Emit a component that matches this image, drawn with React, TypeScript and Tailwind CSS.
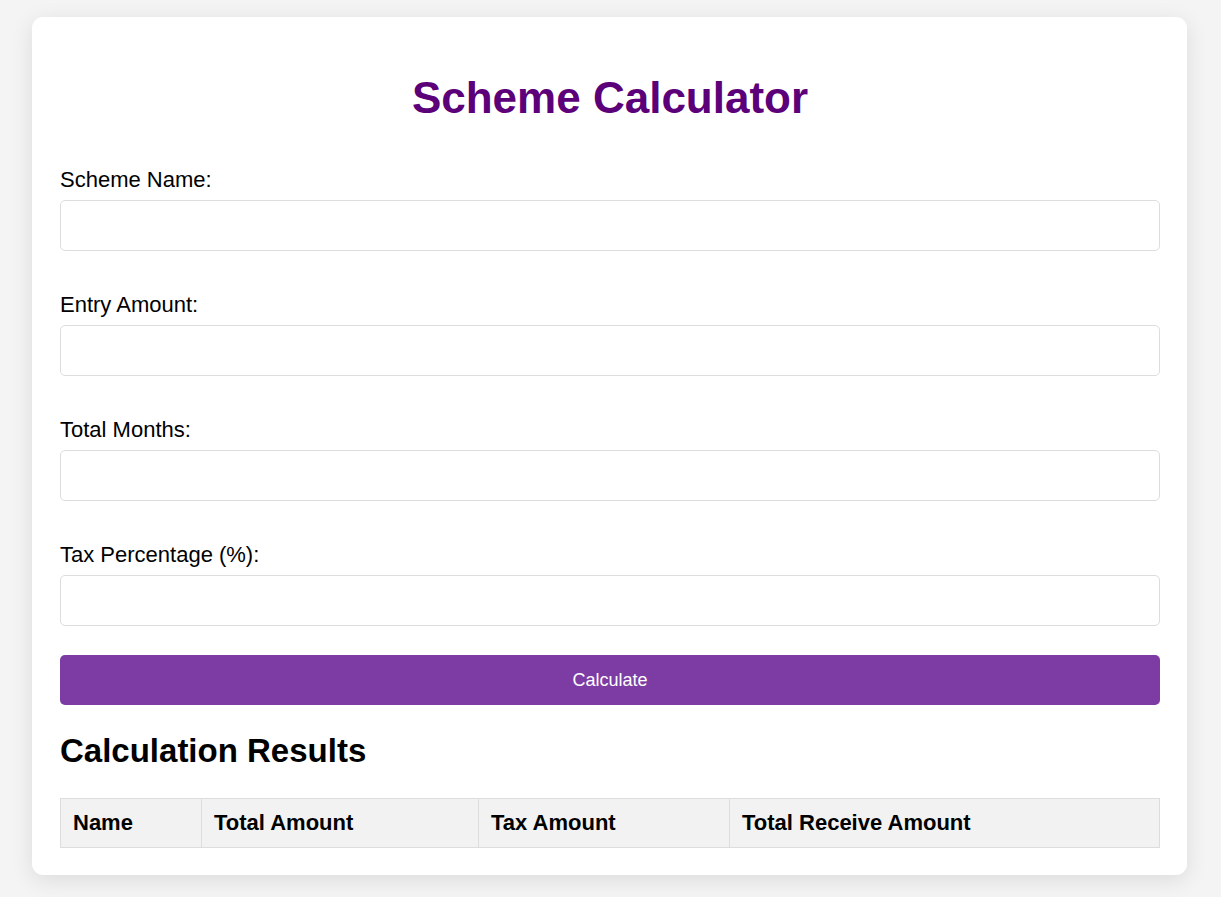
import { useState, type FormEvent } from "react";

type Result = { name: string; total: number; tax: number; receive: number };

const fields = [
  { id: "schemeName", label: "Scheme Name:", type: "text" },
  { id: "entryAmount", label: "Entry Amount:", type: "number" },
  { id: "totalMonths", label: "Total Months:", type: "number" },
  { id: "taxPercentage", label: "Tax Percentage (%):", type: "number" },
];

const columns = [
  { title: "Name", width: "w-[141px]" },
  { title: "Total Amount", width: "w-[277px]" },
  { title: "Tax Amount", width: "w-[251px]" },
  { title: "Total Receive Amount", width: "" },
];

export default function App() {
  const [results, setResults] = useState<Result[]>([]);

  function calculate(event: FormEvent<HTMLFormElement>) {
    event.preventDefault();
    const data = new FormData(event.currentTarget);
    const total = Number(data.get("entryAmount")) * Number(data.get("totalMonths"));
    const tax = (total * Number(data.get("taxPercentage"))) / 100;
    setResults([...results, { name: String(data.get("schemeName")), total, tax, receive: total - tax }]);
  }

  return (
    <div className="min-h-screen bg-[#f4f4f4] pt-[17px] pr-[34px] pb-[22px] pl-8 font-['Liberation_Sans',Arial,sans-serif] text-[22px] leading-[25px] text-black">
      <main className="rounded-[11px] bg-white pt-14 pr-[27px] pb-[27px] pl-7 shadow-[0_5px_22px_rgba(0,0,0,0.1)]">
        <h1 className="text-center text-[44px] leading-[50px] font-bold text-[#5c007a]">Scheme Calculator</h1>
        <form onSubmit={calculate} className="mt-11">
          <div className="flex flex-col gap-[41px]">
            {fields.map((field) => (
              <div key={field.id} className="flex flex-col gap-2">
                <label htmlFor={field.id}>{field.label}</label>
                <input
                  id={field.id}
                  name={field.id}
                  type={field.type}
                  className="h-[51px] w-full rounded-[5px] border border-[#dddddd] bg-white px-3 text-lg"
                />
              </div>
            ))}
          </div>
          <button type="submit" className="mt-[29px] h-[50px] w-full rounded-[5px] bg-[#7d3ca3] text-lg text-white">
            Calculate
          </button>
        </form>
        <h2 className="mt-[27px] text-[33px] leading-[38px] font-bold">Calculation Results</h2>
        <table className="mt-7 w-full table-fixed border-collapse leading-6">
          <thead>
            <tr>
              {columns.map((column) => (
                <th
                  key={column.title}
                  scope="col"
                  className={`${column.width} border border-[#dddddd] bg-[#f2f2f2] px-3 py-3 text-left font-bold`}
                >
                  {column.title}
                </th>
              ))}
            </tr>
          </thead>
          <tbody>
            {results.map((result, index) => (
              <tr key={index}>
                <td className="border border-[#dddddd] px-3 py-3">{result.name}</td>
                <td className="border border-[#dddddd] px-3 py-3">{result.total.toFixed(2)}</td>
                <td className="border border-[#dddddd] px-3 py-3">{result.tax.toFixed(2)}</td>
                <td className="border border-[#dddddd] px-3 py-3">{result.receive.toFixed(2)}</td>
              </tr>
            ))}
          </tbody>
        </table>
      </main>
    </div>
  );
}
